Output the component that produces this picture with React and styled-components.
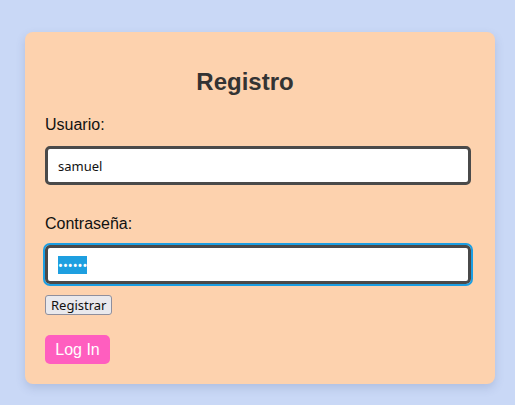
import React, { useEffect, useRef } from 'react';
import styled, { createGlobalStyle } from 'styled-components';

const GlobalStyle = createGlobalStyle`
  html, body {
    margin: 0;
    padding: 0;
    background-color: #c9d8f6;
    font-family: "Liberation Sans", Arial, sans-serif;
  }
`

const Page = styled.div`
  padding: 32px 20px 20px 25px;
`

const Card = styled.form`
  width: 470px;
  box-sizing: border-box;
  padding: 36px 24px 20px 20px;
  background-color: #fdd2ae;
  border-radius: 8px;
  box-shadow: 0 4px 10px rgba(60, 80, 130, 0.18);
  display: flex;
  flex-direction: column;
  align-items: flex-start;
`

const Title = styled.h2`
  align-self: stretch;
  margin: 0 26px 20px 0;
  font-size: 24px;
  line-height: 28px;
  font-weight: bold;
  text-align: center;
  color: #333333;
`

const Label = styled.label`
  display: block;
  font-size: 16px;
  line-height: 18px;
  color: #111111;
  margin-bottom: ${props => props.$gap || 12}px;
`

const Input = styled.input`
  align-self: stretch;
  box-sizing: border-box;
  height: 39px;
  padding: 0 10px;
  border: 3px solid #4a4a4a;
  border-radius: 5px;
  background: #ffffff;
  font-family: "Noto Sans", "DejaVu Sans", sans-serif;
  font-size: 13px;
  color: #111111;
  margin-bottom: ${props => props.$after}px;
  outline: ${props => props.$focused ? '2px solid #1b9ee3' : 'none'};
  outline-offset: 0;

  &:focus {
    outline: 2px solid #1b9ee3;
  }

  &::selection {
    background: #1e9fe0;
    color: #ffffff;
  }
`

const SmallButton = styled.button`
  font-family: "Noto Sans", "DejaVu Sans", sans-serif;
  font-size: 13px;
  line-height: 16px;
  height: 20px;
  padding: 0 5px;
  color: #111111;
  background: #e9e9ed;
  border: 1px solid #8f8f9d;
  border-radius: 3px;
  margin-bottom: 20px;
`

const PinkButton = styled.button`
  height: 29px;
  min-width: 65px;
  padding: 0 10px;
  font-family: "Liberation Sans", Arial, sans-serif;
  font-size: 16px;
  color: #ffffff;
  background: #ff5ebf;
  border: none;
  border-radius: 5px;
`

const App = () => {
  const passRef = useRef(null)

  useEffect(() => {
    if (passRef.current) {
      passRef.current.focus()
      passRef.current.select()
    }
  }, [])

  return (
    <Page>
      <GlobalStyle />
      <Card onSubmit={e => e.preventDefault()}>
        <Title>Registro</Title>
        <Label htmlFor="usuario">Usuario:</Label>
        <Input id="usuario" type="text" defaultValue="samuel" $after={30} />
        <Label htmlFor="pass">Contraseña:</Label>
        <Input id="pass" ref={passRef} type="password" defaultValue="123456" $after={11} $focused />
        <SmallButton type="submit">Registrar</SmallButton>
        <PinkButton type="button">Log In</PinkButton>
      </Card>
    </Page>
  )
}

export default App;
